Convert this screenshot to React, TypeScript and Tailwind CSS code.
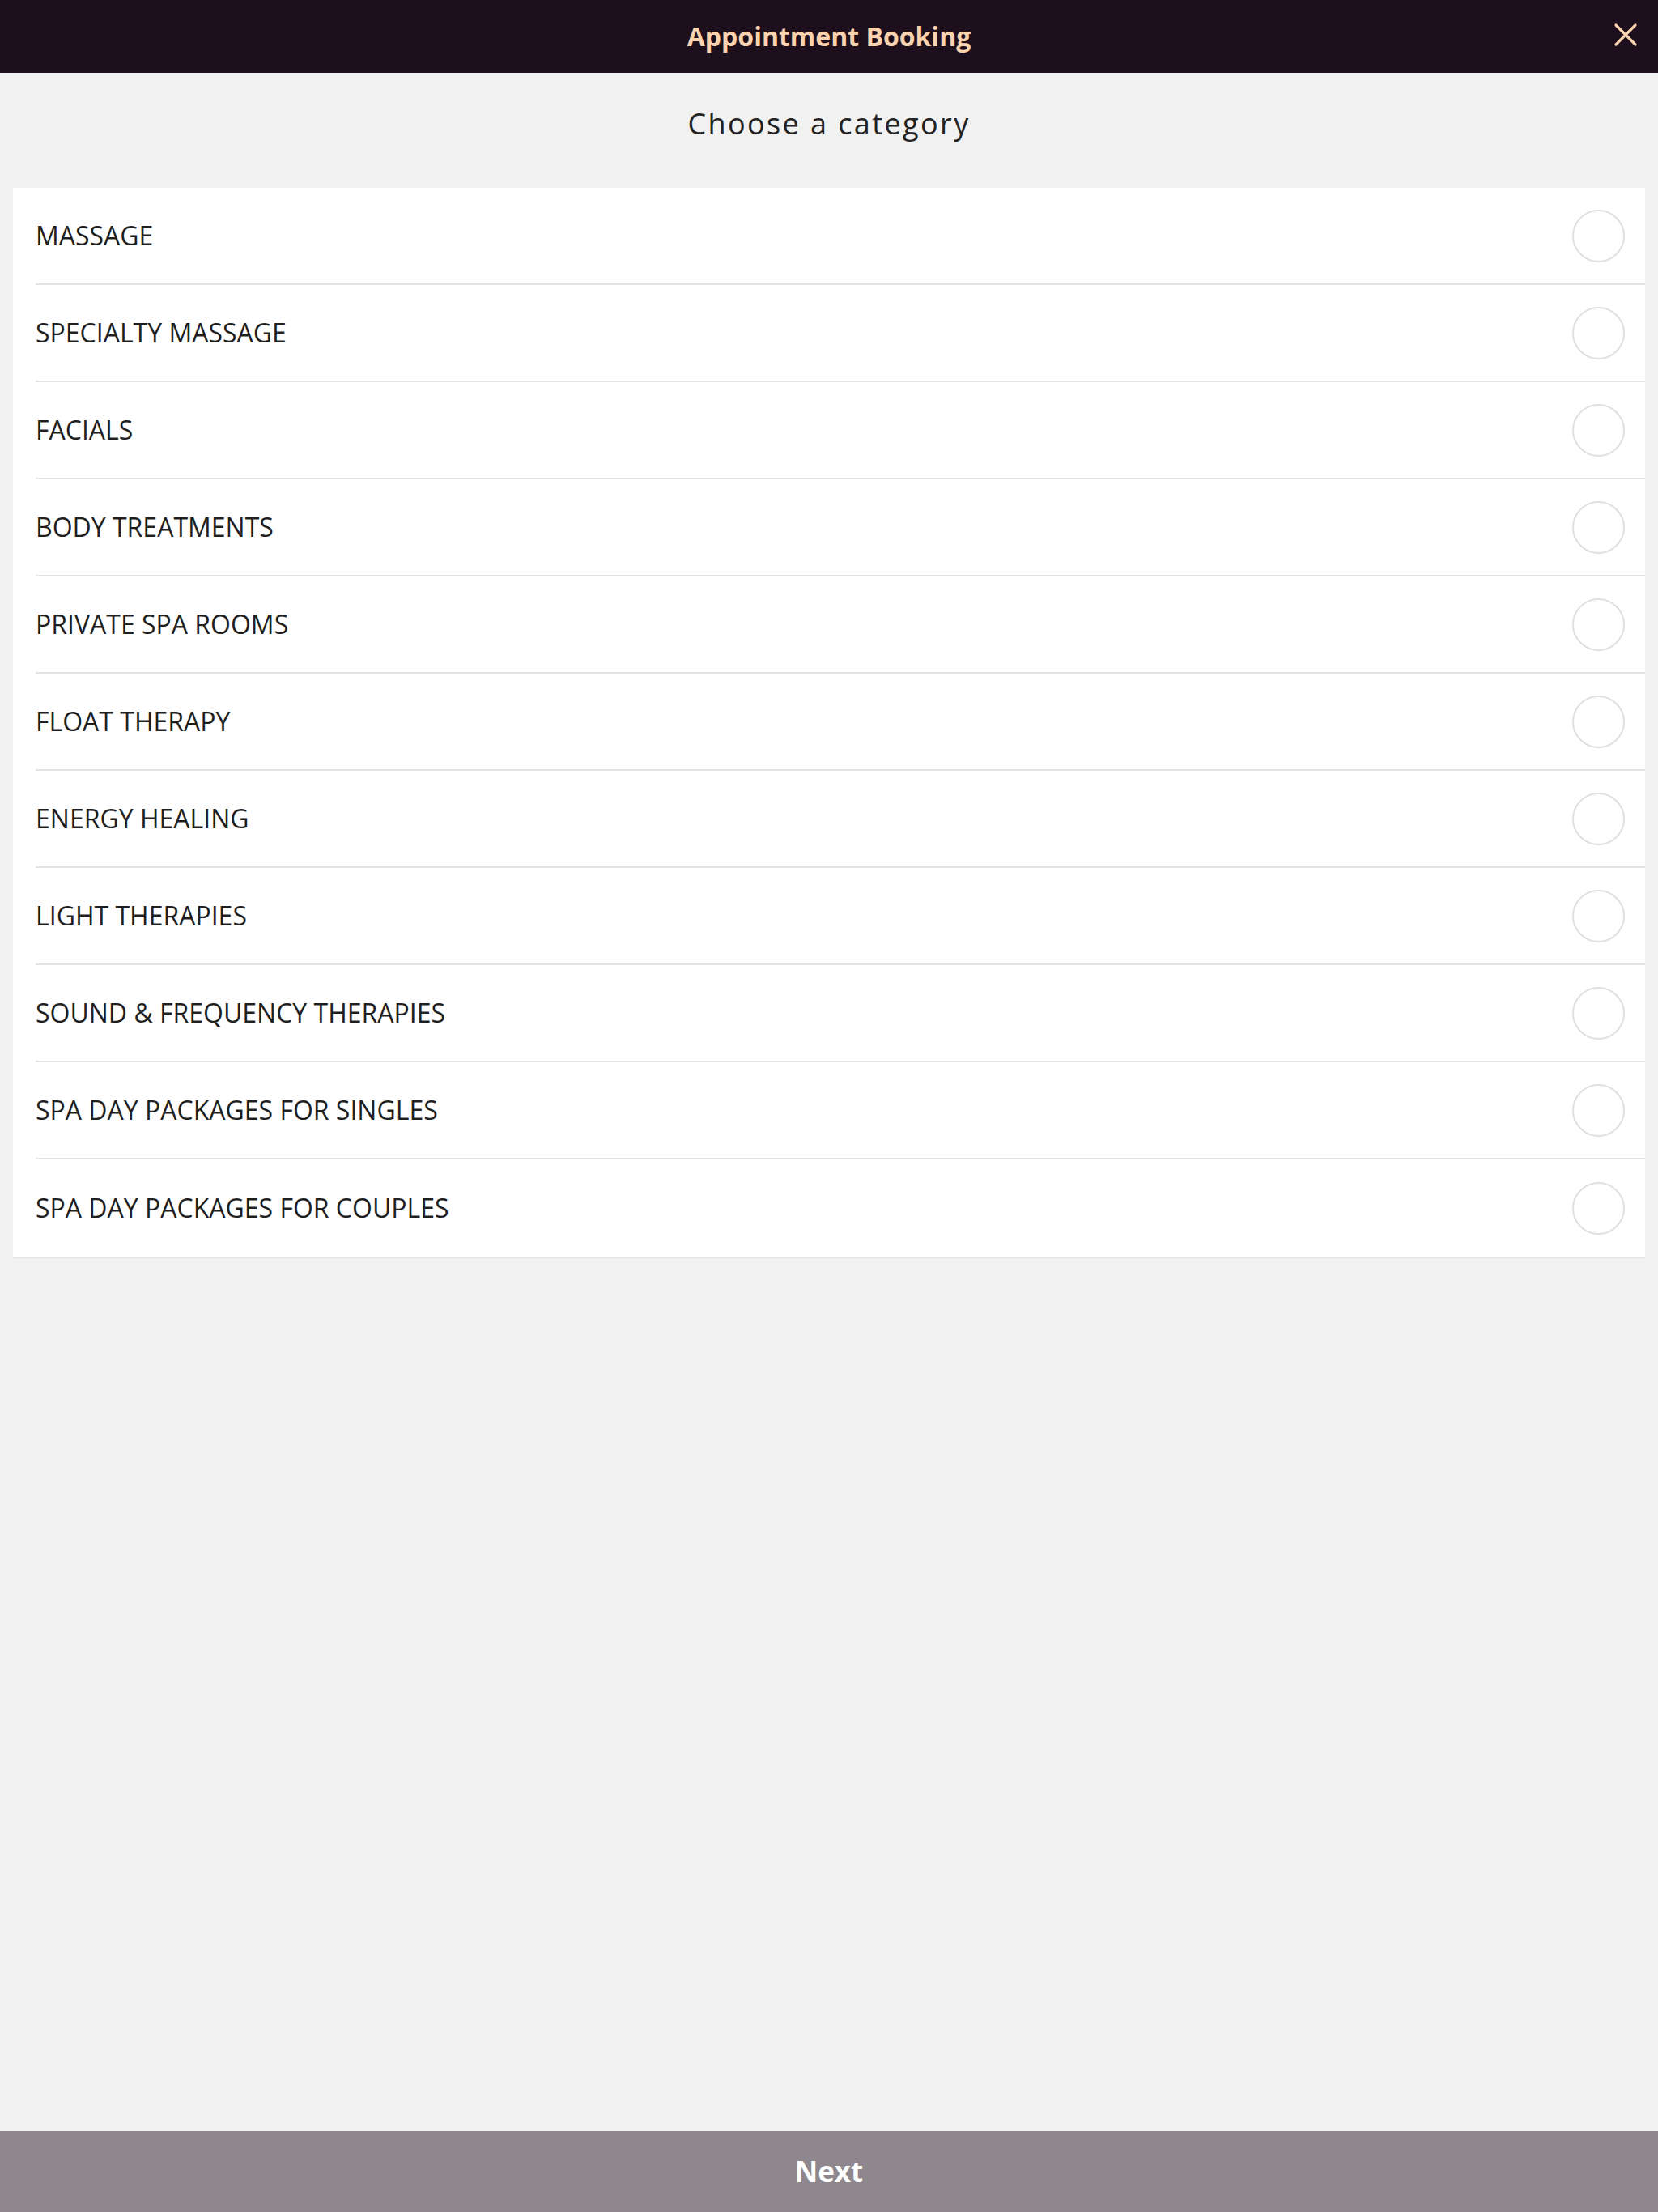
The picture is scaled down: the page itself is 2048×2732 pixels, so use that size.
import React from "react";

const items = [
  "MASSAGE",
  "SPECIALTY MASSAGE",
  "FACIALS",
  "BODY TREATMENTS",
  "PRIVATE SPA ROOMS",
  "FLOAT THERAPY",
  "ENERGY HEALING",
  "LIGHT THERAPIES",
  "SOUND & FREQUENCY THERAPIES",
  "SPA DAY PACKAGES FOR SINGLES",
  "SPA DAY PACKAGES FOR COUPLES",
];

export default function App() {
  return (
    <div className="h-screen w-full flex flex-col bg-[#f1f1f1] font-['Open_Sans',sans-serif]">
      <header className="relative h-[90px] shrink-0 bg-[#1e0f1c] flex items-center justify-center">
        <h1 className="text-[32px] font-bold text-[#fbd3ae] font-['Open_Sans',sans-serif]">
          Appointment Booking
        </h1>
        <button className="absolute right-[24px] top-[27px] w-[32px] h-[32px] flex items-center justify-center">
          <svg width="30" height="30" viewBox="0 0 30 30" fill="none">
            <path d="M3 3 L27 27 M27 3 L3 27" stroke="#fbd3ae" strokeWidth="3.2" strokeLinecap="round" />
          </svg>
        </button>
      </header>

      <main className="flex-1 flex flex-col">
        <div className="h-[142px] pt-[36px] text-center">
          <h2 className="text-[36px] leading-[54px] tracking-[2.4px] text-[#222222]">Choose a category</h2>
        </div>

        <div className="mx-[16px] bg-white border-b-2 border-[#e2e2e2]">
          {items.map((label, i) => (
            <div key={label} className="h-[120px] pl-[28px]">
              <div
                className={
                  i < items.length - 1
                    ? "h-full flex items-center justify-between pr-[25px] border-b-2 border-[#e2e2e2]"
                    : "h-full flex items-center justify-between pr-[25px]"
                }
              >
                <span className="text-[32px] text-[#1f1f1f]">{label}</span>
                <span className="w-[65px] h-[65px] rounded-full border-2 border-[#e0e0e0] bg-white" />
              </div>
            </div>
          ))}
        </div>
      </main>

      <footer className="h-[100px] shrink-0 bg-[#8e878d] flex items-center justify-center">
        <span className="text-[35px] font-bold text-white">Next</span>
      </footer>
    </div>
  );
}
